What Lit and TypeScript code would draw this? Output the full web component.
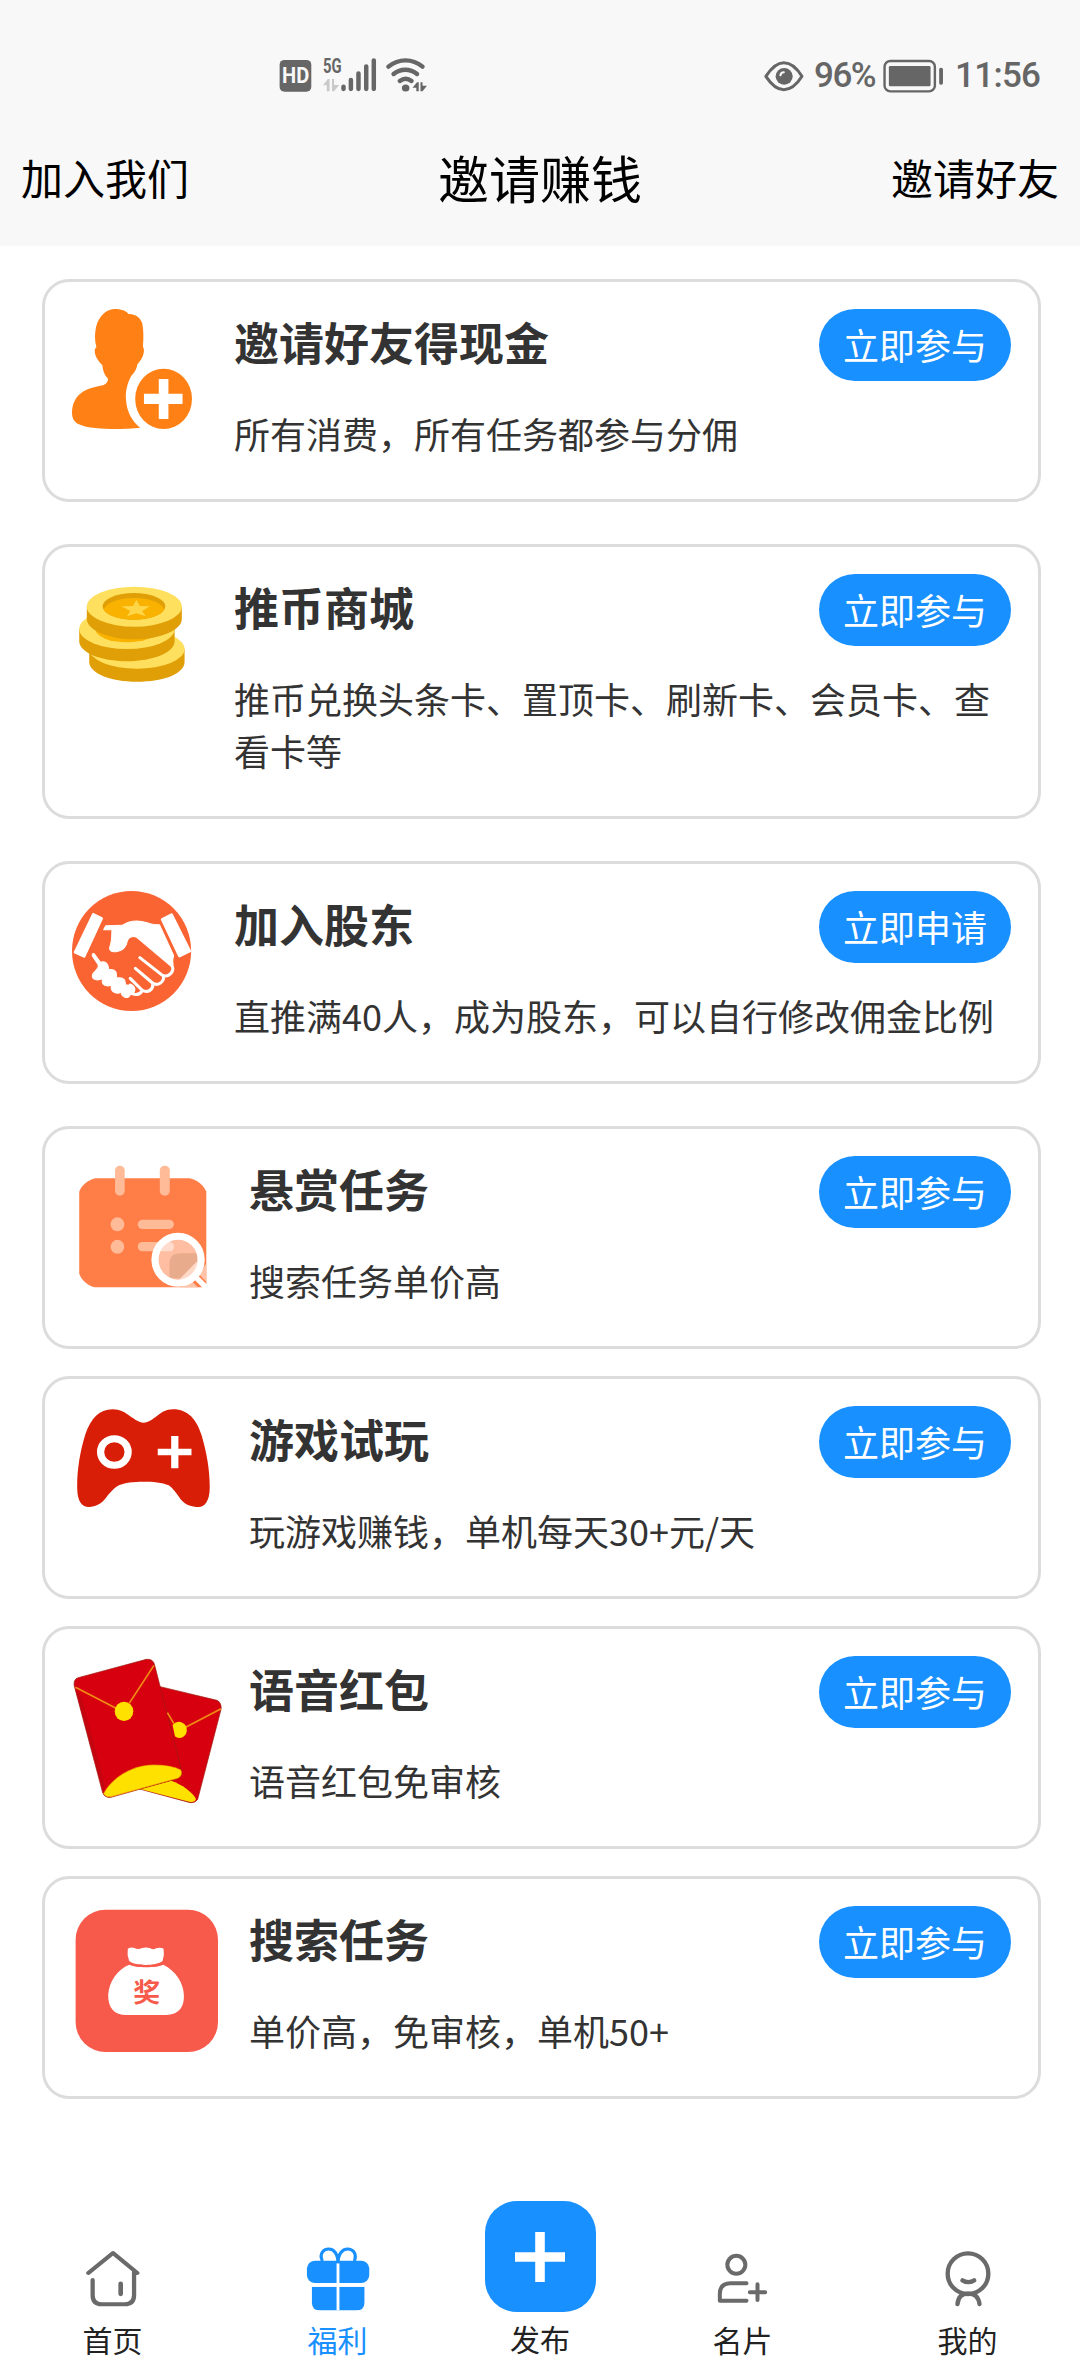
import { LitElement, html, css, svg } from "lit";
import type { TemplateResult } from "lit";
import { customElement, property } from "lit/decorators.js";
import { classMap } from "lit/directives/class-map.js";

interface Offer {
  title: string;
  text: string;
  action: string;
  icon: TemplateResult;
  big?: boolean;
}

const inviteIcon = html`<svg viewBox="122 117 348.5 360" preserveAspectRatio="none" width="120" height="120">
  <g fill="#ff8115">
    <path d="M245 117C270 117 280 124 286 132C305 131 320 142 326 160C330 180 330 205 328 230C333 237 331 250 326 262C322 272 316 278 312 283C309 300 303 308 294 318C280 345 277 370 279 390C281 425 297 455 320 473C300 475 270 477 250 477C210 477 165 475 142 463C128 455 122 445 122 428C122 405 130 385 146 371C165 356 190 350 212 346C222 343 228 333 226 325C218 318 212 305 210 285C200 275 188 260 188 243C188 238 190 235 193 232C187 210 188 190 192 170C200 140 220 118 245 117Z"/>
    <ellipse cx="388" cy="386.500" rx="82.500" ry="90.500"/>
  </g>
  <path fill="#fff" d="M374 327H402V371H443V402H402V447H374V402H331V371H374Z"/>
</svg>`;

const coinsIcon = html`<svg viewBox="122 132 348.5 360" preserveAspectRatio="none" width="120" height="120">
  <path fill="#e09f07" d="M172 357V395C172 430 235 455 310 455C390 455 449 430 449 395V357Z"/>
  <ellipse fill="#ffdf5e" cx="310.500" cy="357" rx="138.500" ry="59"/>
  <path fill="#e09f07" d="M143 297V334C143 367 205 394 281 394C358 394 420 367 420 334V297Z"/>
  <ellipse fill="#ffdf5e" cx="281.500" cy="297" rx="138.500" ry="60"/>
  <ellipse fill="#fab200" cx="281" cy="297" rx="91" ry="40"/>
  <path fill="#e09f07" d="M165 230V267C165 300 227 328 303 328C379 328 441 300 441 267V230Z"/>
  <ellipse fill="#ffdf5e" cx="303" cy="230" rx="138" ry="60"/>
  <ellipse fill="#e09f07" cx="302" cy="229" rx="91" ry="40"/>
  <path fill="#fab200" d="M214 238C222 218 258 204 302 204C346 204 382 218 390 238C382 257 346 269 302 269C258 269 222 257 214 238Z"/>
  <path fill="#ffd648" d="M309 210L319 228L348 229L326 243L336 259L309 250L282 259L291 243L266 229L299 228Z"/>
</svg>`;

const handshakeIcon = html`<svg viewBox="122 123 348.5 360" preserveAspectRatio="none" width="120" height="120">
  <ellipse fill="#fa6432" cx="295" cy="303" rx="173" ry="180"/>
  <g fill="#fff" stroke="#fff" stroke-width="8" stroke-linejoin="round">
    <path d="M184 193L208 205L157 319L131 307Z"/>
    <path d="M411 194L464 303L434 318L384 208Z"/>
    <path stroke-width="3" d="M214 239L220 227L268 226C290 211 315 210 340 218Q356 225 376 224L417 316L411 350L310 262C298 256 286 262 283 272C280 290 270 303 250 305C234 307 229 300 232 290C239 270 237 255 238 239Z"/>
    <path stroke-width="3" d="M181 318Q179 309 186 311L205 337Q218 332 226 345L229 359Q244 356 250 367L252 384Q268 381 275 390L278 405Q292 403 296 413Q299 422 293 430Q288 446 276 442Q265 438 265 427Q252 433 241 425Q233 418 237 405Q220 412 212 402Q208 396 211 386Q194 394 184 386Q178 378 184 369Q194 360 198 352L198 344Z"/>
  </g>
  <g fill="none" stroke="#fff" stroke-width="9" stroke-linecap="round" stroke-linejoin="round">
    <path d="M319 323L382 374C402 386 420 364 413 348L411 330"/>
    <path d="M306 355L356 399C371 410 389 396 388 380"/>
    <path d="M291 385L325 420C343 431 358 418 357 402"/>
    <path d="M291 405C305 412 304 422 296 431C310 437 320 432 326 422"/>
  </g>
</svg>`;

const taskIcon = html`<svg viewBox="122 138 435.6 450" preserveAspectRatio="none" width="150" height="150">
  <path fill="#ff7d47" d="M190 205H464C490 212 505 228 512 245V532H188C165 525 150 510 143 491V245C150 226 168 210 190 205Z"/>
  <path fill="#ffc3a8" d="M440 532L470 514L487 532ZM512 460V515L492 494Z"/>
  <g fill="#ffbb97">
    <rect x="247" y="167" width="28" height="90" rx="14"/>
    <rect x="377" y="167" width="29" height="90" rx="14"/>
    <ellipse cx="254" cy="343" rx="20" ry="21"/>
    <ellipse cx="254" cy="410.500" rx="20" ry="21"/>
    <rect x="313" y="329" width="105" height="28" rx="14"/>
    <rect x="313" y="396" width="105" height="28" rx="14"/>
  </g>
  <ellipse fill="#ffbda2" cx="430" cy="449" rx="68" ry="71"/>
  <path fill="#ffdccd" d="M385 396H405Q418 398 418 410Q417 424 404 424H378Z"/>
  <path fill="#e8ac8c" d="M405 505V462Q405 430 436 430H490L484 458L438 505Z"/>
  <path fill="#ffd9c8" d="M484 455L490 470L470 500L430 512Z"/>
  <ellipse fill="none" stroke="#fff" stroke-width="21" cx="430" cy="449" rx="67" ry="70.500"/>
  <path stroke="#fff" stroke-width="16" fill="none" d="M478 498L514 535"/>
</svg>`;

const gameIcon = html`<svg viewBox="122 138 435.6 450" preserveAspectRatio="none" width="150" height="150">
  <path fill="#d81e06" d="M240 148C282 148 302 188 330 188C360 188 375 148 415 148C460 148 485 180 499 228C512 275 522 325 522 383C522 425 505 441 490 441C470 441 450 435 437 417C425 400 415 385 403 376C385 367 355 365 330 365C300 365 275 368 258 376C235 390 225 410 212 424C200 436 185 441 173 441C150 441 137 425 137 378C137 330 145 275 161 222C178 175 200 148 240 148Z"/>
  <circle fill="none" stroke="#fff" stroke-width="21" cx="245" cy="276" r="40"/>
  <path fill="#fff" d="M410 228H431V266H469V286H431V325H410V286H371V266H410Z"/>
</svg>`;

const packetIcon = html`<svg viewBox="122 138 435.6 450" preserveAspectRatio="none" width="150" height="150">
  <g stroke="#9c1a10" stroke-width="2">
    <path fill="#d7000f" d="M378 230L543 271Q557 279 555 297L487 568Q481 579 465 578L318 537L340 380Z"/>
    <path fill="#ffe100" stroke="none" d="M320 537L410 512C440 522 474 548 482 567Q480 577 465 576Z"/>
    <path fill="#d7000f" d="M140 203L338 148Q358 146 362 165L441 485Q443 500 428 506L235 562Q217 564 211 548L128 225Q127 207 140 203Z"/>
  </g>
  <path fill="#bd0712" d="M131 236L150 262L216 520L213 548Z" opacity=".75"/>
  <path fill="#ffe100" stroke="#f2a800" stroke-width="2" d="M214 551C240 500 300 465 360 465Q410 465 438 480Q444 498 428 505L235 560Q220 562 214 551Z"/>
  <path fill="none" stroke="#f08c14" stroke-width="5" d="M132 232L250 295M360 166L288 280M399 308L418 341M555 296L452 352"/>
  <ellipse fill="#ffe100" cx="273" cy="304" rx="27" ry="29"/>
  <path fill="#ffe100" d="M414 345Q424 334 434 335C463 340 462 381 434 384Q426 384 421 379Z"/>
</svg>`;

const bagIcon = html`<svg viewBox="122 138 435.6 450" preserveAspectRatio="none" width="150" height="150">
  <rect fill="#f7594b" x="132.500" y="149" width="413.500" height="427" rx="87" ry="90"/>
  <path fill="#fff" d="M284 266Q294 260 303 264Q314 270 324 265Q335 260 348 264Q358 271 366 265Q378 261 388 266Q391 285 385 303C366 318 308 319 288 303Q281 285 284 266Z"/>
  <path fill="#fff" d="M288 314C306 324 370 324 387 314C424 332 447 370 447 408C447 450 425 465 390 465H280C245 465 227 445 227 405C229 365 255 327 288 314Z"/>
  <text class="seal" x="339" y="426" text-anchor="middle" fill="#f7594b">奖</text>
</svg>`;

const offers: Offer[] = [
  { title: "邀请好友得现金", text: "所有消费，所有任务都参与分佣", action: "立即参与", icon: inviteIcon },
  { title: "推币商城", text: "推币兑换头条卡、置顶卡、刷新卡、会员卡、查看卡等", action: "立即参与", icon: coinsIcon },
  { title: "加入股东", text: "直推满40人，成为股东，可以自行修改佣金比例", action: "立即申请", icon: handshakeIcon },
  { title: "悬赏任务", text: "搜索任务单价高", action: "立即参与", icon: taskIcon, big: true },
  { title: "游戏试玩", text: "玩游戏赚钱，单机每天30+元/天", action: "立即参与", icon: gameIcon, big: true },
  { title: "语音红包", text: "语音红包免审核", action: "立即参与", icon: packetIcon, big: true },
  { title: "搜索任务", text: "单价高，免审核，单机50+", action: "立即参与", icon: bagIcon, big: true },
];

@customElement("offer-card")
class OfferCard extends LitElement {
  @property({ attribute: false }) offer!: Offer;

  static styles = css`
    :host { display: block; }
    .card {
      display: flex;
      box-sizing: border-box;
      padding: 27px 27px 40px;
      border: 3px solid #dcdcdc;
      border-radius: 27px;
      background: #fff;
      gap: 42px;
    }
    .card.big { gap: 27px; height: 223px; }
    svg { display: block; flex: none; }
    .body { flex: 1; min-width: 0; }
    .head { display: flex; justify-content: space-between; height: 72px; margin-bottom: 26px; }
    .title { margin: 0; font-size: 45px; line-height: 65px; font-weight: 700; }
    .text { margin: 0; font-size: 36px; line-height: 52px; }
    .action {
      box-sizing: border-box;
      width: 192px;
      height: 72px;
      padding: 0 0 2px;
      border: 0;
      border-radius: 36px;
      background: #1890ff;
      color: #fff;
      font: inherit;
      font-size: 36px;
      line-height: 70px;
      text-align: center;
    }
    .seal { font-size: 78px; font-weight: 700; }
  `;

  render() {
    const { title, text, action, icon, big } = this.offer;
    return html`<article class=${classMap({ card: true, big: !!big })}>
      ${icon}
      <div class="body">
        <div class="head">
          <h2 class="title">${title}</h2>
          <button class="action">${action}</button>
        </div>
        <p class="text">${text}</p>
      </div>
    </article>`;
  }
}

const navArt = {
  home: svg`<g fill="none" stroke="#6a6a6a" stroke-width="12" stroke-linecap="round" stroke-linejoin="round">
    <path d="M134 279L203 219L271 279M262 276V345Q262 373 236 373H171Q146 373 146 345V300"/>
    <path stroke-width="13" d="M224.500 311V342"/></g>`,
  gift: svg`<g fill="#1890ff">
    <rect x="746" y="242" width="174.500" height="67" rx="23"/>
    <path d="M760 320H907V368Q907 391 884 391H783Q760 391 760 368Z"/>
    <path fill="#fff" d="M829 250H837V391H829ZM760 309H907V320H760Z"/>
    <path fill="none" stroke="#1890ff" stroke-width="9" d="M789 243C779 218 795 207 807 207C822 207 833 222 833 250C833 222 845 207 860 207C873 207 887 218 879 243"/></g>`,
  contact: svg`<g fill="none" stroke="#6a6a6a" stroke-width="12" stroke-linecap="round" stroke-linejoin="round">
    <circle cx="407.500" cy="254.500" r="27"/>
    <path d="M438 310H390Q358 310 358 342V362H438M448 337H494M471 313V360"/></g>`,
  me: svg`<g fill="none" stroke="#6a6a6a" stroke-width="13" stroke-linecap="round">
    <circle cx="1102.500" cy="281" r="61"/>
    <path d="M1086 301Q1103 312 1121 301M1071 372C1073 350 1085 341 1103 341C1122 341 1134 350 1137 372"/></g>`,
};

@customElement("app-root")
class AppRoot extends LitElement {
  static styles = css`
    :host {
      display: flex;
      flex-direction: column;
      height: 2376px;
      background: #fff;
      color: #333;
      font-family: "Noto Sans CJK SC", sans-serif;
    }
    svg { display: block; flex: none; overflow: visible; }
    .top { background: #f8f8f8; height: 246px; flex: none; }
    .status {
      display: flex;
      align-items: center;
      justify-content: space-between;
      box-sizing: border-box;
      height: 113px;
      padding: 38px 42px 0 279px;
      color: #666;
      font: 500 35px/36px Roboto, sans-serif;
    }
    .sys { display: flex; align-items: center; }
    .pct { width: 62px; margin: 0 7px 0 10px; letter-spacing: -1.500px; white-space: nowrap; }
    .clock { width: 83px; margin-left: 11px; letter-spacing: -.700px; white-space: nowrap; }
    .mini { font-family: Roboto, sans-serif; font-weight: 700; }
    .bar {
      display: grid;
      grid-template-columns: 1fr auto 1fr;
      align-items: center;
      box-sizing: border-box;
      height: 132px;
      padding: 0 21px 5px;
      color: #000;
      font-size: 42px;
    }
    .bar h1 { margin: 0; font-size: 51px; font-weight: 400; }
    .right { text-align: right; }
    .list { display: flex; flex-direction: column; flex: 1; padding: 33px 39px 0 42px; }
    offer-card { margin-bottom: 42px; }
    offer-card.tight { margin-bottom: 27px; }
    .tabs { display: grid; grid-template-columns: 1fr 1fr 180px 1fr 1fr; flex: none; height: 176px; }
    .tab {
      display: flex;
      flex-direction: column;
      align-items: center;
      justify-content: flex-end;
      gap: 2px;
      padding-bottom: 15px;
      color: #222;
      font-size: 30px;
      line-height: 44px;
    }
    .active { color: #1890ff; }
    .publish { gap: 4px; padding-bottom: 16px; }
    .plus {
      display: flex;
      align-items: center;
      justify-content: center;
      width: 111px;
      height: 111px;
      border-radius: 32px;
      background: #1890ff;
    }
  `;

  private tab(label: string, art: TemplateResult | unknown, box: string, active = false) {
    return html`<div class=${classMap({ tab: true, active })}>
      <svg viewBox=${box} preserveAspectRatio="none" width="72" height="72">${art}</svg>
      <span>${label}</span>
    </div>`;
  }

  render() {
    return html`
      <header class="top">
        <div class="status">
          <svg viewBox="810.2 50 435.6 111" preserveAspectRatio="none" width="150" height="37">
            <rect fill="#666" x="812" y="59" width="92" height="95" rx="14"/>
            <text class="mini" x="819" y="129" font-size="64" textLength="79" lengthAdjust="spacingAndGlyphs" fill="#f8f8f8">HD</text>
            <text class="mini" x="938" y="98" font-size="60" textLength="54" lengthAdjust="spacingAndGlyphs" fill="#666">5G</text>
            <path fill="#c9c9c9" d="M938 135L952 116H957V153H949V135ZM964 116H970V134H985L970 153H964Z"/>
            <g stroke="#666" stroke-width="13" stroke-linecap="round">
              <path d="M997.500 139V146M1019 119V146M1041 99V146M1063.500 78V146M1085.500 60V146"/>
            </g>
            <g fill="none" stroke="#666" stroke-width="13" stroke-linecap="round">
              <path d="M1128 79C1158 54 1197 54 1227 79M1143 101C1163 84 1191 84 1211 101M1161 122C1172 113 1184 113 1195 122"/>
            </g>
            <ellipse fill="#666" cx="1178" cy="143" rx="11" ry="10.500"/>
            <path fill="#666" d="M1198 142L1211 126H1216V153H1209V142ZM1221 126H1227V136H1240L1227 153H1221Z"/>
          </svg>
          <div class="sys">
            <svg viewBox="649 52 117 108" preserveAspectRatio="none" width="40" height="36">
              <path fill="none" stroke="#666" stroke-width="9" stroke-linejoin="round" d="M654.500 107Q680 66 707 66Q736 66 760 107Q736 147 707 147Q680 147 654.500 107Z"/>
              <circle fill="#666" cx="708" cy="107" r="25"/>
              <path fill="none" stroke="#f8f8f8" stroke-width="6" stroke-linecap="round" d="M697 104Q698 95 707 95"/>
            </svg>
            <span class="pct">96%</span>
            <svg viewBox="995 52 177 108" preserveAspectRatio="none" width="61" height="36">
              <rect fill="none" stroke="#666" stroke-width="7" x="999.500" y="61" width="146" height="91" rx="17"/>
              <rect fill="#666" x="1012" y="76" width="121" height="61" rx="4"/>
              <rect fill="#666" x="1158" y="81" width="11" height="51" rx="5"/>
            </svg>
            <span class="clock">11:56</span>
          </div>
        </div>
        <nav class="bar">
          <span>加入我们</span>
          <h1>邀请赚钱</h1>
          <span class="right">邀请好友</span>
        </nav>
      </header>
      <main class="list">
        ${offers.map((o) => html`<offer-card class=${classMap({ tight: !!o.big })} .offer=${o}></offer-card>`)}
      </main>
      <footer class="tabs">
        ${this.tab("首页", navArt.home, "102.2 189 201.6 216")}
        ${this.tab("福利", navArt.gift, "732.2 189 201.6 216", true)}
        <div class="tab publish">
          <div class="plus">
            <svg viewBox="0 0 50 50" width="50" height="50"><path fill="#fff" d="M20.200 0H29.800V20.200H50V29.800H29.800V50H20.200V29.800H0V20.200H20.200Z"/></svg>
          </div>
          <span>发布</span>
        </div>
        ${this.tab("名片", navArt.contact, "319.5 189 216 216")}
        ${this.tab("我的", navArt.me, "994.5 189 216 216")}
      </footer>
    `;
  }
}
